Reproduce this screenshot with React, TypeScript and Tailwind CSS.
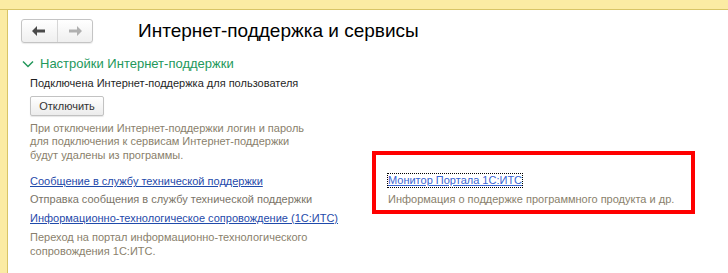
export default function App() {
  return (
    <div className="w-[728px] h-[273px] bg-white overflow-hidden font-['Liberation_Sans',Arial,sans-serif] flex flex-col">
      {/* top strip */}
      <div className="h-[10px] shrink-0 bg-[#fbeba3] border-b border-[#d8c466]" />
      <div className="flex flex-1">
        <div className="w-[8px] shrink-0 bg-[#fbeba3] border-r border-[#d8c466]" />
        <div className="flex-1 pl-[13px]">
          {/* header */}
          <div className="flex items-center mt-[9px]">
            <div className="flex h-[24px] w-[72px] rounded-[3px] border border-[#c4c4c4] bg-gradient-to-b from-white to-[#efefef] shadow-[0_1px_1px_rgba(0,0,0,0.08)]">
              <div className="flex-1 flex items-center justify-center border-r border-[#d6d6d6]">
                <svg width="14" height="10" viewBox="0 0 14 10">
                  <path d="M0 5 L5 0 L5 3.5 L13 3.5 L13 6.5 L5 6.5 L5 10 Z" fill="#4a4a4a" />
                </svg>
              </div>
              <div className="flex-1 flex items-center justify-center">
                <svg width="14" height="10" viewBox="0 0 14 10">
                  <path d="M14 5 L9 0 L9 3.5 L1 3.5 L1 6.5 L9 6.5 L9 10 Z" fill="#b0b0b0" />
                </svg>
              </div>
            </div>
            <h1 className="ml-[45px] text-[19px] leading-[24px] text-black">Интернет-поддержка и сервисы</h1>
          </div>

          {/* group header */}
          <div className="flex items-center mt-[13px] h-[16px]">
            <svg width="12" height="8" viewBox="0 0 12 8" className="ml-[1px]">
              <path d="M1 1.5 L6 6.5 L11 1.5" fill="none" stroke="#23985b" strokeWidth="1.5" />
            </svg>
            <span className="ml-[6px] text-[13px] text-[#23985b]">Настройки Интернет-поддержки</span>
          </div>

          <div className="flex">
            {/* left column */}
            <div className="w-[351px] shrink-0 pl-[9px]">
              <p className="mt-[4px] text-[11px] leading-[14px] text-[#1f1f1f]">Подключена Интернет-поддержка для пользователя</p>
              <button className="mt-[6px] h-[20px] w-[74px] rounded-[2px] border border-[#c2c2c2] bg-gradient-to-b from-white to-[#ececec] text-[11px] text-[#333] shadow-[0_1px_1px_rgba(0,0,0,0.1)]">
                Отключить
              </button>
              <p className="mt-[5px] text-[11px] leading-[13.5px] text-[#8a7f6c]">
                При отключении Интернет-поддержки логин и пароль
                <br />
                для подключения к сервисам Интернет-поддержки
                <br />
                будут удалены из программы.
              </p>
              <a className="block mt-[12px] text-[11px] leading-[14px] text-[#1f4aaa] underline">Сообщение в службу технической поддержки</a>
              <p className="mt-[4px] text-[11px] leading-[14px] text-[#7a7468]">Отправка сообщения в службу технической поддержки</p>
              <a className="block mt-[5px] text-[11px] leading-[14px] text-[#1f4aaa] underline">Информационно-технологическое сопровождение (1С:ИТС)</a>
              <p className="mt-[6px] text-[11px] leading-[13.5px] text-[#8a7f6c]">
                Переход на портал информационно-технологического
                <br />
                сопровождения 1С:ИТС.
              </p>
            </div>

            {/* right column */}
            <div className="pt-[79px]">
              <div className="w-[323px] h-[63px] border-4 border-[#ff0000] pl-[12px] pt-[19px]">
                <a className="block w-fit text-[11px] leading-[13px] text-[#3a66d4] underline outline-1 outline-dotted outline-black">Монитор Портала 1С:ИТС</a>
                <p className="mt-[5px] text-[11px] leading-[14px] text-[#8a7f6c]">Информация о поддержке программного продукта и др.</p>
              </div>
            </div>
          </div>
        </div>
      </div>
    </div>
  );
}
